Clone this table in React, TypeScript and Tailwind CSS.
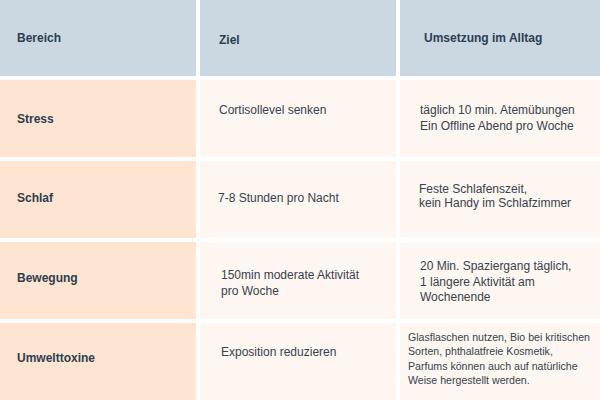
import React from "react";

const font = { fontFamily: '"Liberation Sans", Arial, sans-serif' };

export default function App() {
  return (
    <div
      className="w-[600px] h-[400px] bg-white grid grid-cols-[196px_196px_200px] grid-rows-[76px_77px_77px_77px_77px] gap-[4px] overflow-hidden"
      style={font}
    >
      {/* Header */}
      <div className="bg-[#cbd8e2] flex items-center pl-[17px] text-[12px] font-bold text-[#2c3e50] leading-[16px]">
        Bereich
      </div>
      <div className="bg-[#cbd8e2] flex items-center pl-[19px] pt-[3px] text-[12px] font-bold text-[#2c3e50] leading-[16px]">
        Ziel
      </div>
      <div className="bg-[#cbd8e2] flex items-center pl-[24px] text-[12px] font-bold text-[#2c3e50] leading-[16px]">
        Umsetzung im Alltag
      </div>

      {/* Stress */}
      <div className="bg-[#fee5d1] flex items-center pl-[17px] text-[12px] font-bold text-[#2c3e50] leading-[16px]">
        Stress
      </div>
      <div className="bg-[#fef6f0] flex items-center pl-[19px] pb-[18px] text-[12px] text-[#36424e] leading-[16px]">
        Cortisollevel senken
      </div>
      <div className="bg-[#fef6f0] flex items-center pl-[20px] pb-[2px] text-[12px] text-[#36424e] leading-[16px]">
        <div>
          täglich 10 min. Atemübungen
          <br />
          Ein Offline Abend pro Woche
        </div>
      </div>

      {/* Schlaf */}
      <div className="bg-[#fee5d1] flex items-center pl-[17px] pb-[3px] text-[12px] font-bold text-[#2c3e50] leading-[16px]">
        Schlaf
      </div>
      <div className="bg-[#fef6f0] flex items-center pl-[18px] pb-[3px] text-[12px] text-[#36424e] leading-[16px]">
        7-8 Stunden pro Nacht
      </div>
      <div className="bg-[#fef6f0] flex items-center pl-[19px] pb-[7px] text-[12px] text-[#36424e] leading-[14.5px]">
        <div>
          Feste Schlafenszeit,
          <br />
          kein Handy im Schlafzimmer
        </div>
      </div>

      {/* Bewegung */}
      <div className="bg-[#fee5d1] flex items-center pl-[17px] pb-[6px] text-[12px] font-bold text-[#2c3e50] leading-[16px]">
        Bewegung
      </div>
      <div className="bg-[#fef6f0] flex items-center pl-[21px] pt-[4px] text-[12px] text-[#36424e] leading-[16px]">
        <div>
          150min moderate Aktivität
          <br />
          pro Woche
        </div>
      </div>
      <div className="bg-[#fef6f0] flex items-center pl-[20px] pt-[4px] text-[12px] text-[#36424e] leading-[15.7px]">
        <div>
          20 Min. Spaziergang täglich,
          <br />
          1 längere Aktivität am
          <br />
          Wochenende
        </div>
      </div>

      {/* Umwelttoxine */}
      <div className="bg-[#fee5d1] flex items-center pl-[17px] pb-[7px] text-[12px] font-bold text-[#2c3e50] leading-[16px]">
        Umwelttoxine
      </div>
      <div className="bg-[#fef6f0] flex items-center pl-[21px] pb-[19px] text-[12px] text-[#36424e] leading-[16px]">
        Exposition reduzieren
      </div>
      <div className="bg-[#fef6f0] flex items-center pl-[8px] pb-[6px] text-[10.6px] text-[#36424e] leading-[14.3px] whitespace-nowrap">
        <div>
          Glasflaschen nutzen, Bio bei kritischen
          <br />
          Sorten, phthalatfreie Kosmetik,
          <br />
          Parfums können auch auf natürliche
          <br />
          Weise hergestellt werden.
        </div>
      </div>
    </div>
  );
}
